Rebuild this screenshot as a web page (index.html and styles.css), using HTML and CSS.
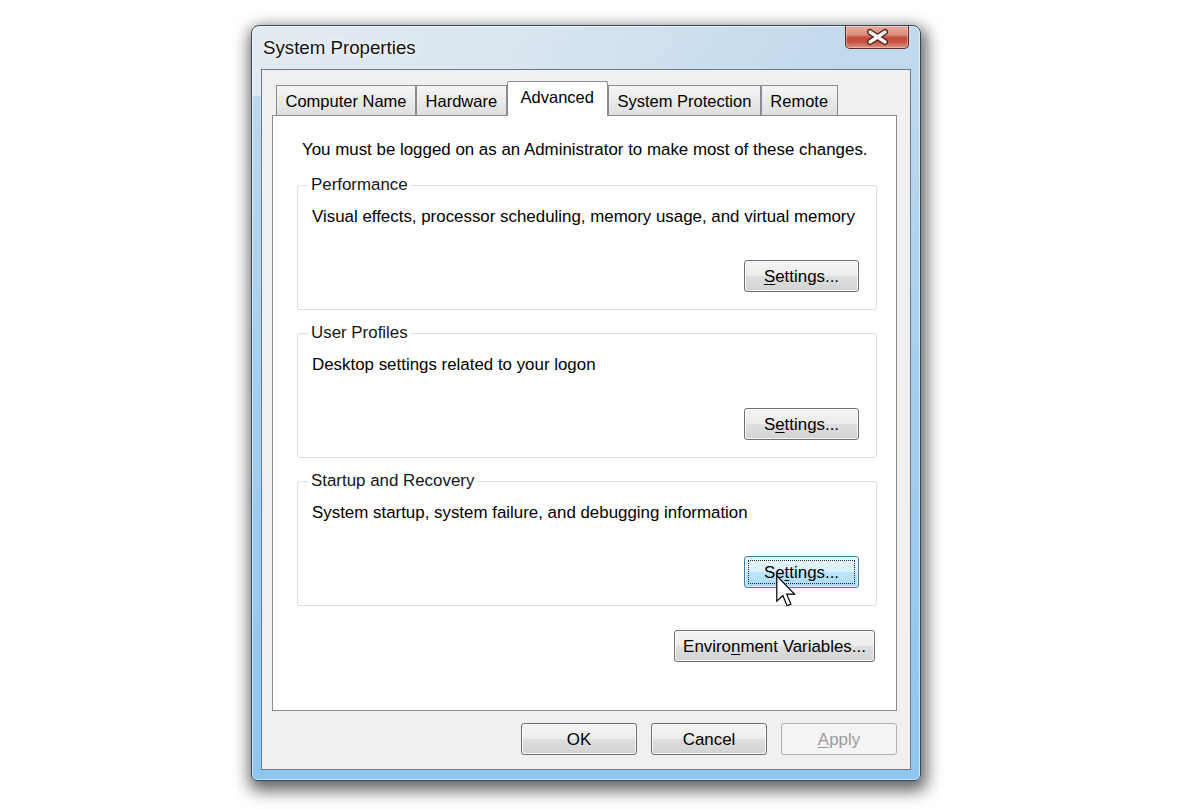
FILE: index.html
```html
<!DOCTYPE html>
<html lang="en">
<head>
<meta charset="utf-8">
<title>System Properties</title>
<link rel="stylesheet" href="styles.css">
</head>
<body>
<div class="stage">
  <div class="window">
    <div class="titlebar">
      <span class="title">System Properties</span>
      <div class="close">
        <svg width="64" height="23" viewBox="0 0 64 23">
          <path d="M25 7 L40 17 M40 7 L25 17" stroke="#4a1f1a" stroke-width="6" stroke-linecap="round" fill="none"/>
          <path d="M25 7 L40 17 M40 7 L25 17" stroke="#fbf3f1" stroke-width="3.4" stroke-linecap="round" fill="none"/>
        </svg>
      </div>
    </div>
    <div class="frame">
      <div class="client">
        <div class="tabs">
          <div class="tab">Computer Name</div>
          <div class="tab">Hardware</div>
          <div class="tab tab-active">Advanced</div>
          <div class="tab">System Protection</div>
          <div class="tab">Remote</div>
        </div>
        <div class="panel">
          <p class="intro">You must be logged on as an Administrator to make most of these changes.</p>
          <fieldset class="group">
            <legend>Performance</legend>
            <p class="desc">Visual effects, processor scheduling, memory usage, and virtual memory</p>
            <button class="btn btn-settings"><u>S</u>ettings...</button>
          </fieldset>
          <fieldset class="group">
            <legend>User Profiles</legend>
            <p class="desc">Desktop settings related to your logon</p>
            <button class="btn btn-settings">S<u>e</u>ttings...</button>
          </fieldset>
          <fieldset class="group">
            <legend>Startup and Recovery</legend>
            <p class="desc">System startup, system failure, and debugging information</p>
            <button class="btn btn-settings btn-focus">Se<u>t</u>tings...
              <svg class="cursor" width="20" height="32" viewBox="0 0 12.5 20">
                <path d="M0.5 0.5 V16.3 L4.3 12.8 L6.9 19.2 L9.3 18.2 L6.7 12 H11.6 Z" fill="#fff" stroke="#000" stroke-width="0.75" stroke-linejoin="miter"/>
              </svg>
            </button>
          </fieldset>
          <button class="btn btn-env">Enviro<u>n</u>ment Variables...</button>
        </div>
        <div class="actions">
          <button class="btn btn-dialog">OK</button>
          <button class="btn btn-dialog">Cancel</button>
          <button class="btn btn-dialog btn-disabled"><u>A</u>pply</button>
        </div>
      </div>
    </div>
  </div>
</div>
</body>
</html>
```
FILE: styles.css
```css
* {
  box-sizing: border-box;
}

html,
body {
  height: 100%;
}

body {
  margin: 0;
  min-height: 810px;
  background: #ffffff;
  font-family: "Liberation Sans", Arial, sans-serif;
  font-size: 16.9px;
  color: #000;
}

.stage {
  padding: 25px 0 29px 251px;
}

.window {
  width: 670px;
  height: 756px;
  border: 1px solid #35475a;
  border-radius: 8px 8px 6px 6px;
  background:
    linear-gradient(90deg, rgba(232, 237, 242, 0.85) 0%, rgba(232, 237, 242, 0.6) 40%, rgba(232, 237, 242, 0) 88%) top / 100% 70px no-repeat,
    linear-gradient(180deg, #c4daec 0%, #a6cfef 45%, #8fc6f0 100%);
  box-shadow: 2px 6px 16px 4px rgba(0, 0, 0, 0.6), inset 0 0 0 1px rgba(255, 255, 255, 0.55);
  display: flex;
  flex-direction: column;
}

.titlebar {
  height: 43px;
  flex: none;
  display: flex;
  justify-content: space-between;
  padding: 0 11px;
}

.title {
  align-self: center;
  font-size: 18.7px;
  margin-top: 1px;
  color: #111;
  text-shadow: 0 0 6px rgba(255, 255, 255, 0.95), 0 0 2px rgba(255, 255, 255, 0.9);
}

.close {
  width: 64px;
  height: 23px;
  border: 1px solid #5e2b25;
  border-top: none;
  border-radius: 0 0 5px 5px;
  background: linear-gradient(180deg, #e9ab9d 0%, #dc8f80 38%, #c3473a 55%, #c95444 72%, #e09382 100%);
  box-shadow: inset 0 0 0 1px rgba(255, 255, 255, 0.35);
}

.close svg {
  display: block;
  margin: -1px 0 0 -1px;
}

.frame {
  flex: 1;
  display: flex;
  padding: 0 9px 10px;
}

.client {
  flex: 1;
  display: flex;
  flex-direction: column;
  border: 1px solid #6c7c8a;
  background: #f0f0f0;
}

.tabs {
  display: flex;
  align-items: flex-end;
  padding: 11px 0 0 14px;
  margin-bottom: -1px;
  position: relative;
  z-index: 1;
  font-size: 16.5px;
}

.tab {
  height: 31px;
  padding: 1px 8.5px 0;
  line-height: 29px;
  border: 1px solid #898c95;
  background: linear-gradient(180deg, #f5f5f5 0%, #ebebeb 50%, #dedede 100%);
  white-space: nowrap;
}

.tab-active {
  height: 35px;
  padding: 0 13px 1px;
  line-height: 31px;
  background: #fff;
  border-bottom: none;
  border-radius: 2px 2px 0 0;
}

.panel {
  height: 596px;
  margin: 0 13px 0 10px;
  border: 1px solid #898c95;
  background: #fff;
  padding: 24px 19px 0 24px;
  display: flex;
  flex-direction: column;
}

.intro {
  margin: 0 0 0 5px;
  line-height: 20px;
  white-space: nowrap;
}

.group {
  margin: 15px 0 0;
  min-width: 0;
  border: 1px solid #d5dfe5;
  border-radius: 3px;
  padding: 12px 17px 17px 14px;
  display: flex;
  flex-direction: column;
}

.group + .group {
  margin-top: 13px;
}

.group legend {
  padding: 0 3px;
  margin-left: -4px;
  line-height: 20px;
  color: #151515;
}

.desc {
  margin: 0;
  line-height: 20px;
  white-space: nowrap;
}

.btn {
  font: inherit;
  color: #000;
  height: 32px;
  padding: 1px 0 0;
  line-height: 29px;
  text-align: center;
  border: 1px solid #707070;
  border-radius: 3px;
  background: linear-gradient(180deg, #f4f4f4 0%, #ececec 50%, #dfdfdf 51%, #d2d2d2 100%);
  box-shadow: inset 0 0 0 1px rgba(255, 255, 255, 0.8);
  white-space: nowrap;
}

.btn u {
  text-decoration-thickness: 1px;
  text-underline-offset: 2px;
}

.btn-settings {
  align-self: flex-end;
  margin-top: 33px;
  width: 115px;
}

.btn-focus {
  position: relative;
  border-color: #3c7fb1;
  background: linear-gradient(180deg, #eaf6fd 0%, #d9f0fc 50%, #bee6fd 51%, #a7d9f5 100%);
  box-shadow: inset 0 0 0 1px rgba(255, 255, 255, 0.6);
}

.btn-focus::after {
  content: "";
  position: absolute;
  inset: 3px;
  border: 1px dotted #222;
  border-radius: 1px;
}

.cursor {
  position: absolute;
  left: 31px;
  top: 18px;
  z-index: 2;
}

.btn-env {
  align-self: flex-end;
  margin: 24px 2px 0 0;
  width: 201px;
}

.actions {
  display: flex;
  justify-content: flex-end;
  gap: 14px;
  padding: 12px 13px 0 0;
}

.btn-dialog {
  width: 116px;
}

.btn-disabled {
  color: #9c9c9c;
  border-color: #adb2b5;
  background: #f4f4f4;
  box-shadow: none;
}
```
